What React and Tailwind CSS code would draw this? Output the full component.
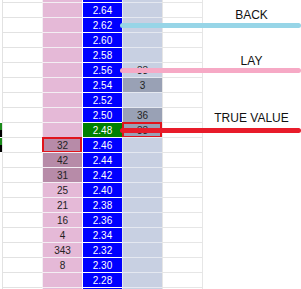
import React from "react";

const rows = [
    { id: "top", price: "" },
    { price: "2.64" },
    { price: "2.62" },
    { price: "2.60" },
    { price: "2.58" },
    { price: "2.56", lay: "33" },
    { price: "2.54", lay: "3", layDark: true },
    { price: "2.52" },
    { price: "2.50", lay: "36", layDark: true },
    { price: "2.48", lay: "33", layDark: true, layRed: true, green: true, marker: true },
    { price: "2.46", back: "32", backDark: true, backRed: true, marker: true },
    { price: "2.44", back: "42", backDark: true },
    { price: "2.42", back: "31", backDark: true },
    { price: "2.40", back: "25" },
    { price: "2.38", back: "21" },
    { price: "2.36", back: "16" },
    { price: "2.34", back: "4" },
    { price: "2.32", back: "343" },
    { price: "2.30", back: "8" },
    { price: "2.28" },
    { id: "bottom", price: "" },
];

const Cell = ({ className, children, red }) => (
    <div className={`relative w-[40px] h-full border-t border-l flex items-center justify-center ${className}`}>
        <span className="pt-px">{children}</span>
        {red && <div className="absolute -top-px -left-px w-[40px] h-[16px] border-2 border-[#e0141c]" />}
    </div>
);

const Row = ({ row }) => (
    <div className="flex h-[15px]">
        <div className="w-[2px] h-full flex flex-col">
            {row.marker ? (
                <>
                    <div className="h-[7px] bg-[#1a8a1a] mt-px" />
                    <div className="flex-1 bg-black" />
                </>
            ) : null}
        </div>
        <Cell className="bg-white border-[#e2e2e2]" />
        <Cell
            red={row.backRed}
            className={`${row.backDark ? "bg-[#b78ba8]" : "bg-[#e5b9d7]"} border-[#f3eef3] text-[#222]`}
        >
            {row.back}
        </Cell>
        <Cell className={`${row.green ? "bg-[#008000]" : "bg-[#0000ff]"} border-white text-white`}>
            {row.price}
        </Cell>
        <Cell
            red={row.layRed}
            className={`${row.layDark ? "bg-[#99a1b5]" : "bg-[#c8d0e2]"} border-[#e4e8f0] text-[#222]`}
        >
            {row.lay}
        </Cell>
        <Cell className="bg-white border-[#e6e6e6]" />
        <div className="flex-1 h-full border-l border-[#e6e6e6] bg-white" />
    </div>
);

const Arrow = ({ top, color }) => (
    <div className={`absolute left-[120px] w-[181px] h-[5px] rounded-full ${top} ${color}`} />
);

export default function App() {
    return (
        <div className="relative w-[301px] h-[289px] overflow-hidden bg-white font-['Liberation_Sans',Arial,sans-serif] text-[10px] leading-none">
            <div className="-mt-[13px]">
                {rows.map((row) => (
                    <Row key={row.id || row.price} row={row} />
                ))}
            </div>

            <div className="absolute inset-0 pointer-events-none">
                <div className="absolute left-[202px] right-0 top-[8px] text-center text-[12px] leading-[14px] text-[#111]">BACK</div>
                <div className="absolute left-[202px] right-0 top-[54px] text-center text-[12px] leading-[14px] text-[#111]">LAY</div>
                <div className="absolute left-[202px] right-0 top-[111px] text-center text-[12px] leading-[14px] text-[#111]">TRUE VALUE</div>
                <Arrow top="top-[23px]" color="bg-[#97d5e7]" />
                <Arrow top="top-[68px]" color="bg-[#f6a9c5]" />
                <Arrow top="top-[128px]" color="bg-[#e81b2a]" />
            </div>
        </div>
    );
}
